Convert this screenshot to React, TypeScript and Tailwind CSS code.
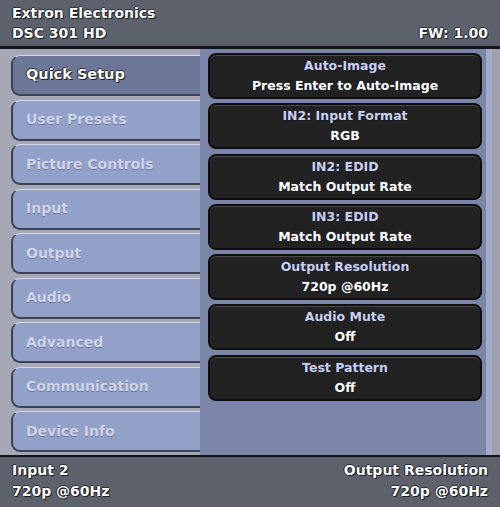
const MENU = [
  "Quick Setup",
  "User Presets",
  "Picture Controls",
  "Input",
  "Output",
  "Audio",
  "Advanced",
  "Communication",
  "Device Info",
];

const SETTINGS: Array<{ title: string; value: string }> = [
  { title: "Auto-Image", value: "Press Enter to Auto-Image" },
  { title: "IN2: Input Format", value: "RGB" },
  { title: "IN2: EDID", value: "Match Output Rate" },
  { title: "IN3: EDID", value: "Match Output Rate" },
  { title: "Output Resolution", value: "720p @60Hz" },
  { title: "Audio Mute", value: "Off" },
  { title: "Test Pattern", value: "Off" },
];

const shadow = "[text-shadow:1px_1px_0_#1b1d24,-1px_0_0_#1b1d24,0_-1px_0_#2a2d36]";

function MenuButton({ label, active }: { label: string; active: boolean }) {
  return (
    <div
      className={
        "h-[41px] flex items-center pl-[13px] rounded-l-[9px] border-l-2 border-b-2 border-t border-[#3c4256] border-t-[#d6dae6] " +
        (active
          ? "bg-[#6c7697] text-white text-[14.5px] " + shadow
          : "bg-[#93a0c8] text-[#cfd5e9] text-[14px] [text-shadow:0_1px_0_#6b7598]")
      }
    >
      {label}
    </div>
  );
}

function SettingCard({ title, value }: { title: string; value: string }) {
  return (
    <div className="h-[46px] rounded-[8px] bg-[#222222] border-2 border-[#0e0e0e] shadow-[inset_0_1px_0_#4a4a4a] flex flex-col items-center justify-center leading-[20px]">
      <div className={"text-[12.5px] text-[#c9cff0] " + shadow}>{title}</div>
      <div className={"text-[12.5px] text-white " + shadow}>{value}</div>
    </div>
  );
}

export default function App() {
  return (
    <div className="w-[500px] h-[507px] bg-[#14151a] flex flex-col font-['DejaVu_Sans',sans-serif] font-bold overflow-hidden">
      <header className={"h-[46px] bg-[#5d616c] px-[12px] pt-[3px] text-white text-[14px] leading-[20px] " + shadow}>
        <div>Extron Electronics</div>
        <div className="flex justify-between">
          <span>DSC 301 HD</span>
          <span>FW: 1.00</span>
        </div>
      </header>

      <main className="mt-[3px] h-[406px] flex">
        <div className="w-[200px] bg-[#a6a9b5] pl-[11px] pt-[6px] flex flex-col gap-[3.5px]">
          {MENU.map((m, i) => (
            <MenuButton key={m} label={m} active={i === 0} />
          ))}
        </div>
        <div className="flex-1 bg-[#7a85a7] pl-[8px] pr-[4px] pt-[4px] flex flex-col gap-[4.3px]">
          {SETTINGS.map((s) => (
            <SettingCard key={s.title} title={s.title} value={s.value} />
          ))}
        </div>
        <div className="w-[14px] flex">
          <div className="w-[6px] bg-[#a3abcb]" />
          <div className="flex-1 bg-[#9da1ad]" />
        </div>
      </main>

      <footer className={"mt-[2px] flex-1 bg-[#5d616c] px-[12px] pt-[3px] text-white text-[14px] leading-[21px] flex justify-between " + shadow}>
        <div>
          <div>Input 2</div>
          <div>720p @60Hz</div>
        </div>
        <div className="text-right">
          <div>Output Resolution</div>
          <div>720p @60Hz</div>
        </div>
      </footer>
    </div>
  );
}
